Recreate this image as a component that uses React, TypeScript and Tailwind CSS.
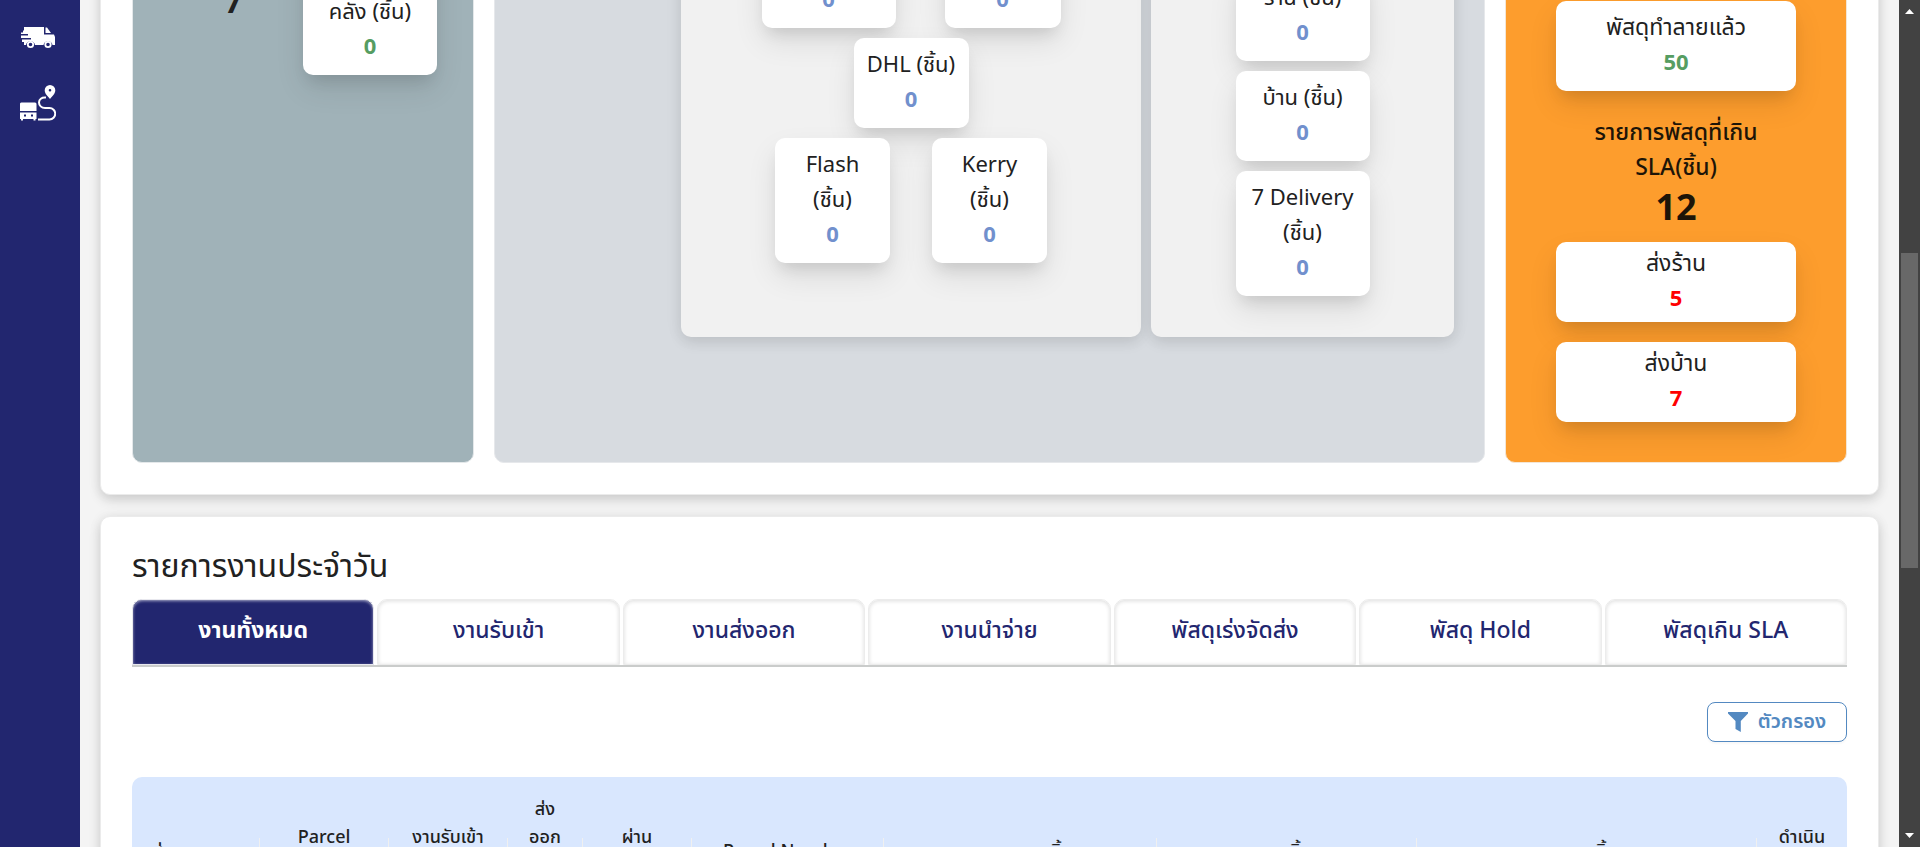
import React from "react";

const cardShadow = "shadow-[0_14px_30px_rgba(0,0,0,0.09),0_10px_16px_-6px_rgba(0,0,0,0.12)]";
const panelShadow = "shadow-[0_0_20px_rgba(0,0,0,0.05),0_6px_14px_rgba(0,0,0,0.09)]";
const sectionCard = "rounded-[10px] border border-[#ebebeb] bg-white px-[31px] shadow-[0_0_14px_rgba(0,0,0,0.05),0_5px_12px_rgba(0,0,0,0.14)]";

type StatProps = {
  lines: string[];
  value: string;
  tone?: string;
  size?: string;
};

function Stat({ lines, value, tone = "text-[#7190cd]", size = "w-[115px] py-[10px] text-[22px]" }: StatProps) {
  return (
    <div className={`rounded-[10px] bg-white text-center leading-[35px] ${cardShadow} ${size}`}>
      {lines.map((line) => (
        <p key={line} className="whitespace-nowrap">{line}</p>
      ))}
      <p className={`text-[22px] font-bold ${tone}`}>{value}</p>
    </div>
  );
}

function VanIcon() {
  return (
    <svg width="36" height="22" viewBox="0 0 36 22" fill="none" aria-hidden="true">
      <path fill="#fff" fillRule="evenodd" d="M4 0h20v7.500h10L35 10v8h-2.500a4.600 4.600 0 0 0-9 0H15a4.600 4.600 0 0 0-9 0H4v-3H2v-2.500h9V11H1V8.500h7V7H1V5.500h2V3.500h1z" />
      <path fill="#fff" d="M25.500.5H27l4 5.500h-5.500z" />
      <circle cx="10.500" cy="17.500" r="2.700" stroke="#fff" strokeWidth="1.800" />
      <circle cx="28" cy="17.500" r="2.700" stroke="#fff" strokeWidth="1.800" />
    </svg>
  );
}

function RouteIcon() {
  return (
    <svg width="36" height="36" viewBox="0 0 36 36" fill="none" aria-hidden="true">
      <path fill="#fff" d="M2 17.500h13a1.500 1.500 0 0 1 1.500 1.500v7H0v-7a1.500 1.500 0 0 1 2-1.500z" />
      <path fill="#fff" fillRule="evenodd" d="M0 27.500h16.500V34H15.500v1.500h-2V34H3v1.500H1V34H0zm4 2v2h2v-2zm7 0v2h2v-2z" />
      <path fill="#fff" fillRule="evenodd" d="M30 0a5.300 5.300 0 0 1 5.300 5.300C35.300 9 32 11.500 30 14 28 11.500 24.700 9 24.700 5.300A5.300 5.300 0 0 1 30 0zm0 4a1.300 1.300 0 1 0 0 2.600A1.300 1.300 0 0 0 30 4z" />
      <path stroke="#fff" strokeWidth="2" d="M26 12.500c-4.500-.5-7 2-7 5s2.500 5.500 6 5.500h4.500a5.700 5.700 0 0 1 0 11.500H18" />
    </svg>
  );
}

function FilterIcon() {
  return (
    <svg width="20" height="20" viewBox="0 0 20 20" fill="currentColor" aria-hidden="true">
      <path d="M0 0h20v1.500L12.800 9v11L7.500 17V9L0 1.500z" />
    </svg>
  );
}

const tabs = ["งานทั้งหมด", "งานรับเข้า", "งานส่งออก", "งานนำจ่าย", "พัสดุเร่งจัดส่ง", "พัสดุ Hold", "พัสดุเกิน SLA"];

const columns = [
  { lines: ["ส่งจาก"], width: "w-[128px]" },
  { lines: ["Parcel", "Type"], width: "w-[129px]" },
  { lines: ["งานรับเข้า", "(ชิ้น)"], width: "w-[119px]" },
  { lines: ["ส่ง", "ออก", "แล้ว", "(ชิ้น)"], width: "w-[75px]" },
  { lines: ["ผ่าน", "(ชิ้น)"], width: "w-[109px]" },
  { lines: ["Parcel Number"], width: "w-[192px]" },
  { lines: ["รายการงานชิ้น"], width: "w-[273px]" },
  { lines: ["งานชิ้น"], width: "w-[260px]" },
  { lines: ["ขนาดชิ้น"], width: "w-[340px]" },
  { lines: ["ดำเนิน", "การ"], width: "w-[90px]" },
];

export default function App() {
  return (
    <div className="flex h-screen overflow-hidden bg-[#f4f4f4] font-['Noto_Sans_Thai','Noto_Sans',sans-serif] text-[#212121]">
      <nav className="flex w-20 shrink-0 flex-col items-start gap-9 bg-[#22266f] pt-[27px] pl-5">
        <a href="#delivery" aria-label="Delivery" className="flex"><VanIcon /></a>
        <a href="#route" aria-label="Route" className="flex"><RouteIcon /></a>
      </nav>

      <main className="min-w-0 flex-1 overflow-hidden px-5">
        <div className="-mt-[120px] flex flex-col gap-[21px]">
          <section className={`grid h-[615px] grid-cols-[342fr_991fr_342fr] gap-5 pb-[31px] ${sectionCard}`}>
            <div className="flex items-start justify-end gap-[59px] rounded-[10px] border border-[#e4e8ea] bg-[#a0b2b8] pr-9">
              <p className="pt-[95px] text-[36px] leading-[50px] font-semibold">7</p>
              <Stat lines={["คลัง (ชิ้น)"]} value="0" tone="text-[#569d62]" size="w-[134px] pt-[113px] pb-[10px] text-[22px]" />
            </div>

            <div className="flex justify-end gap-[10px] rounded-[10px] border border-[#e6e8eb] bg-[#d7dbe0] pr-[30px] pb-[125px]">
              <div className={`flex w-[460px] flex-col items-center justify-end gap-[10px] rounded-[10px] bg-[#f1f1f1] pb-[74px] ${panelShadow}`}>
                <div className="flex gap-[49px]">
                  <Stat lines={[]} value="0" size="w-[134px] pt-[45px] pb-[10px]" />
                  <Stat lines={[]} value="0" size="w-[116px] pt-[45px] pb-[10px]" />
                </div>
                <Stat lines={["DHL (ชิ้น)"]} value="0" />
                <div className="flex gap-[42px]">
                  <Stat lines={["Flash", "(ชิ้น)"]} value="0" />
                  <Stat lines={["Kerry", "(ชิ้น)"]} value="0" />
                </div>
              </div>
              <div className={`flex w-[303px] flex-col items-center justify-end gap-[10px] rounded-[10px] bg-[#f1f1f1] pb-[41px] ${panelShadow}`}>
                <Stat lines={["ร้าน (ชิ้น)"]} value="0" size="w-[134px] py-[10px] text-[22px]" />
                <Stat lines={["บ้าน (ชิ้น)"]} value="0" size="w-[134px] py-[10px] text-[22px]" />
                <Stat lines={["7 Delivery", "(ชิ้น)"]} value="0" size="w-[134px] py-[10px] text-[22px]" />
              </div>
            </div>

            <div className="flex flex-col items-center justify-end rounded-[10px] border border-[#f3e6d6] bg-[#fd9d2d] pb-10">
              <Stat lines={["พัสดุทำลายแล้ว"]} value="50" tone="text-[#569d62]" size="w-[240px] py-[10px] text-[23px]" />
              <h3 className="pt-[25px] text-center text-[23px] leading-[35px] font-medium text-[#1d1508]">
                รายการพัสดุที่เกิน<br />SLA(ชิ้น)
              </h3>
              <p className="pb-[10px] text-[36px] leading-[46px] font-bold text-[#1d1508]">12</p>
              <div className="flex flex-col gap-5">
                <Stat lines={["ส่งร้าน"]} value="5" tone="text-[#ff0000]" size="w-[240px] py-[5px] text-[23px]" />
                <Stat lines={["ส่งบ้าน"]} value="7" tone="text-[#ff0000]" size="w-[240px] py-[5px] text-[23px]" />
              </div>
            </div>
          </section>

          <section className={`pt-[26px] ${sectionCard}`}>
            <h2 className="text-[32px] leading-[48px]">รายการงานประจำวัน</h2>
            <div role="tablist" className="mt-2 flex gap-[3px] border-b-2 border-[#cacccb]">
              {tabs.map((tab, i) => (
                <button
                  key={tab}
                  role="tab"
                  aria-selected={i === 0}
                  className={
                    i === 0
                      ? "h-[66px] flex-1 rounded-t-[10px] border border-[#e8e8ee] bg-[#22266f] pb-[2px] text-[23px] leading-[35px] font-bold text-white shadow-[inset_0_1px_3px_rgba(255,255,255,0.6)]"
                      : "h-[66px] flex-1 rounded-t-[10px] border border-[#ececec] bg-white pb-[2px] text-[23px] leading-[35px] font-medium text-[#22266f] shadow-[inset_0_1px_4px_rgba(0,0,0,0.14)]"
                  }
                >
                  {tab}
                </button>
              ))}
            </div>
            <div className="flex justify-end pt-[35px] pb-[35px]">
              <button className="flex h-10 w-[140px] items-center justify-center gap-[10px] rounded-lg border border-[#5389c1] bg-white text-[20px] font-semibold text-[#5389c1] shadow-[0_2px_2px_rgba(0,0,0,0.03)]">
                <FilterIcon />
                ตัวกรอง
              </button>
            </div>
            <table className="w-full table-fixed border-separate border-spacing-0">
              <thead>
                <tr>
                  {columns.map((col, i) => (
                    <th
                      key={i}
                      scope="col"
                      className={`h-[150px] bg-[#d9e7fe] p-0 text-[18px] leading-[28px] font-medium first:rounded-tl-[10px] last:rounded-tr-[10px] ${col.width}`}
                    >
                      <div className="flex items-center">
                        <div className={i === 0 ? "flex-1 pl-5 text-left" : "flex-1 text-center"}>
                          {col.lines.map((line) => (
                            <div key={line}>{line}</div>
                          ))}
                        </div>
                        {i < columns.length - 1 && <div className="h-7 w-px bg-[#f0f0f0]" />}
                      </div>
                    </th>
                  ))}
                </tr>
              </thead>
            </table>
          </section>
        </div>
      </main>

      <div className="flex w-[21px] shrink-0 flex-col items-center justify-between bg-[#424242] py-[9px]" aria-hidden="true">
        <svg width="9" height="5" viewBox="0 0 9 5" fill="#fff"><path d="M0 5 4.500 0 9 5z" /></svg>
        <div className="-mt-[27px] h-[315px] w-[17px] bg-[#686868]" />
        <svg width="9" height="5" viewBox="0 0 9 5" fill="#fff"><path d="M0 0 4.500 5 9 0z" /></svg>
      </div>
    </div>
  );
}
